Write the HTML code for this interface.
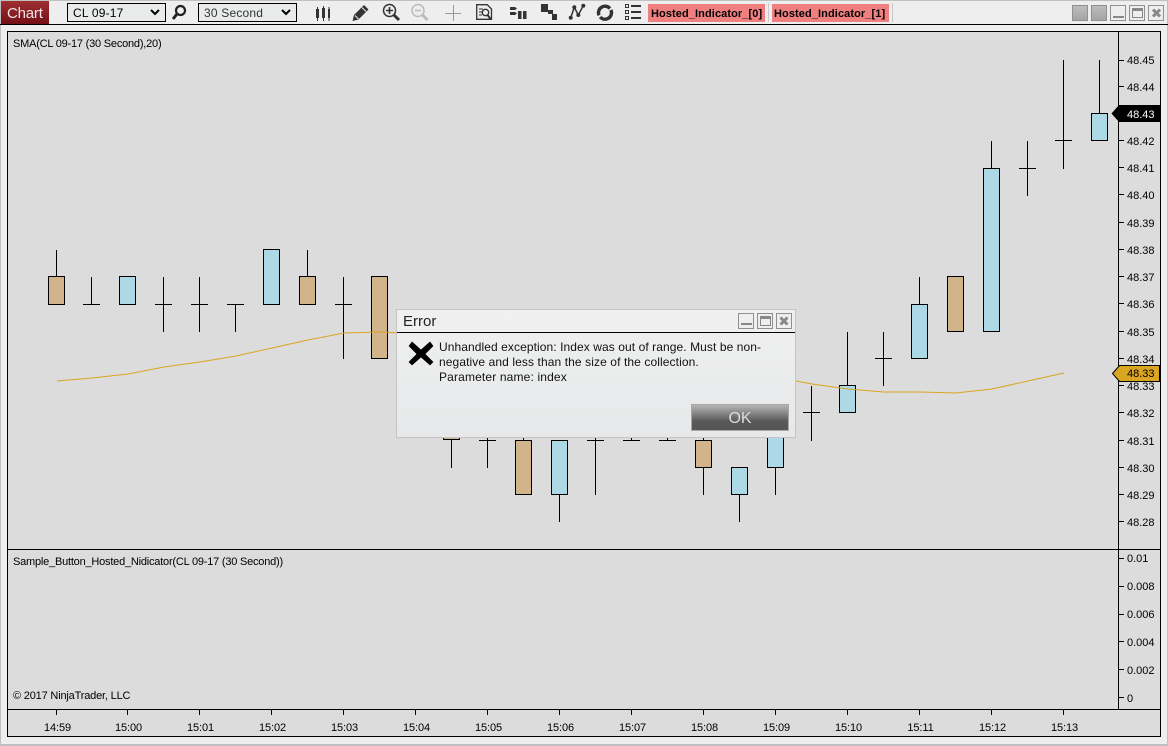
<!DOCTYPE html>
<html><head><meta charset="utf-8"><style>
html,body{margin:0;padding:0;background:#eee}
svg{display:block}
text{font-family:"Liberation Sans",Arial,sans-serif;font-size:11px;fill:#000}
.w{stroke:#000;stroke-width:1;fill:none;shape-rendering:crispEdges}
.t{fill:#D2B48C;stroke:#000;shape-rendering:crispEdges}
.b{fill:#ADD8E6;stroke:#000;shape-rendering:crispEdges}
.c{shape-rendering:crispEdges}
</style></head><body>
<svg width="1168" height="746" viewBox="0 0 1168 746" xmlns="http://www.w3.org/2000/svg">
<defs>
<linearGradient id="tab" x1="0" y1="0" x2="0" y2="1"><stop offset="0" stop-color="#9e2f33"/><stop offset="1" stop-color="#741015"/></linearGradient>
<linearGradient id="dlg" x1="0" y1="0" x2="0" y2="1"><stop offset="0" stop-color="#f0f0f0"/><stop offset="1" stop-color="#e6e8e9"/></linearGradient>
<linearGradient id="ok" x1="0" y1="0" x2="0" y2="1"><stop offset="0" stop-color="#b8b8b8"/><stop offset=".65" stop-color="#585858"/><stop offset="1" stop-color="#555"/></linearGradient>
<linearGradient id="gb" x1="0" y1="0" x2="0" y2="1"><stop offset="0" stop-color="#bdbdbd"/><stop offset="1" stop-color="#a4a4a4"/></linearGradient>
</defs>
<rect width="1168" height="746" fill="#eeeeee"/>
<rect x="0" y="0" width="1168" height="1" fill="#c0c0c0"/>
<rect x="0" y="0" width="1" height="746" fill="#c0c0c0"/>
<rect x="1167" y="0" width="1" height="746" fill="#c0c0c0"/>
<rect x="0" y="744" width="1168" height="2" fill="#c0c0c0"/>
<rect x="1" y="1" width="48" height="23" fill="url(#tab)"/>
<text x="7" y="18" style="font-size:15px;fill:#f0e4e4;letter-spacing:-.2px">Chart</text>
<rect x="0" y="24" width="1168" height="1" fill="#000"/>

<!-- combos -->
<rect x="67.500" y="3.500" width="98" height="18" fill="#e9ebeb" stroke="#000" class="c"/>
<text x="73" y="17" style="font-size:12px;letter-spacing:.2px">CL 09-17</text>
<path d="M151 10l4 4 4-4" fill="none" stroke="#000" stroke-width="2"/>
<rect x="198.500" y="3.500" width="98" height="18" fill="#e9ebeb" stroke="#000" class="c"/>
<text x="204" y="17" style="font-size:12px;letter-spacing:.2px;fill:#333">30 Second</text>
<path d="M282 10l4 4 4-4" fill="none" stroke="#000" stroke-width="2"/>

<!-- toolbar icons -->
<circle cx="180.500" cy="10.500" r="4.500" fill="none" stroke="#222" stroke-width="2.200"/><path d="M177 14l-4 5" stroke="#222" stroke-width="3"/>
<g fill="#333"><rect x="316" y="9" width="3" height="9"/><rect x="322" y="8" width="3" height="10"/><rect x="328" y="9" width="2" height="9"/><rect x="317" y="7" width="1" height="14"/><rect x="323" y="6" width="1" height="15"/><rect x="328.500" y="7" width="1" height="14"/></g>
<path d="M352.500 21l1.500-6 10-10 4.500 4.500-10 10z" fill="#333"/><path d="M355 15.500l3.500 3.500M362 7.500l4 4" stroke="#eee" stroke-width="1"/>
<circle cx="389.500" cy="10.500" r="6" fill="none" stroke="#333" stroke-width="1.500"/><path d="M386 10.500h7M389.500 7v7" stroke="#333" stroke-width="1.600"/><path d="M394 15l5 5" stroke="#333" stroke-width="3"/>
<circle cx="418" cy="10.500" r="6" fill="none" stroke="#bbb" stroke-width="1.500"/><path d="M415 10.500h6" stroke="#bbb" stroke-width="1.500"/><path d="M422.500 15l5 5" stroke="#bbb" stroke-width="3"/>
<path d="M445 13.500h16M453.500 5v16" stroke="#999" stroke-width="1" class="c"/>
<path d="M476.700 4.700h10.500l4.300 4.300v10.300h-14.800z" fill="none" stroke="#333" stroke-width="1.300"/><path d="M479 9h4M479 12h3M479 15h3" stroke="#333"/><circle cx="485.500" cy="12.500" r="3.200" fill="none" stroke="#333" stroke-width="1.400"/><path d="M487.500 15l3.500 4.500" stroke="#333" stroke-width="2"/>
<g fill="#333"><path d="M510 7h5l2 1.500-2 1.500h-5zM510 12h5l2 1.500-2 1.500h-5z"/><rect x="518" y="11" width="3.500" height="8"/><rect x="523" y="11" width="3.500" height="8"/></g>
<g fill="#333" class="c"><rect x="541" y="4" width="7" height="8"/><rect x="548" y="10" width="5" height="4"/><rect x="552" y="14" width="5" height="6"/></g>
<path d="M570.700 17.700l3.600-10.400 4 7.700 5-9.300" fill="none" stroke="#333" stroke-width="1.500"/><g fill="#333"><circle cx="570.700" cy="17.700" r="2"/><circle cx="574.300" cy="7.300" r="2"/><circle cx="578.300" cy="15" r="2"/><circle cx="583.300" cy="5.700" r="2"/></g>
<g transform="rotate(-25 605 12.700)"><circle cx="605" cy="12.700" r="6.500" fill="none" stroke="#333" stroke-width="3.400" stroke-dasharray="18.400 2 18.400 2"/></g>
<g fill="none" stroke="#333" class="c"><rect x="625.500" y="4.500" width="3" height="3"/><rect x="625.500" y="10.500" width="3" height="3"/><rect x="625.500" y="16.500" width="3" height="3"/></g>
<g fill="#333" class="c"><rect x="631" y="5" width="10" height="2"/><rect x="631" y="11" width="10" height="2"/><rect x="631" y="17" width="10" height="2"/></g>

<!-- hosted buttons -->
<rect x="648" y="4" width="117" height="18" fill="#F08080"/>
<text x="651" y="17" style="font-weight:bold;font-size:11px;letter-spacing:.09px">Hosted_Indicator_[0]</text>
<rect x="768" y="3" width="1" height="19" fill="#c8c8c8"/>
<rect x="772" y="4" width="117" height="18" fill="#F08080"/>
<text x="774" y="17" style="font-weight:bold;font-size:11px;letter-spacing:.09px">Hosted_Indicator_[1]</text>
<rect x="892" y="3" width="1" height="19" fill="#c8c8c8"/>

<!-- window buttons -->
<g class="c" stroke="#909090">
<rect x="1072.500" y="5.500" width="15" height="15" fill="url(#gb)"/>
<rect x="1091.500" y="5.500" width="15" height="15" fill="url(#gb)"/>
<rect x="1110.500" y="5.500" width="15" height="15" fill="#eee"/>
<rect x="1129.500" y="5.500" width="15" height="15" fill="#eee"/>
<rect x="1148.500" y="5.500" width="15" height="15" fill="#eee"/>
</g>
<rect x="1113" y="16" width="11" height="2" fill="#888"/>
<rect x="1132.500" y="8.500" width="10" height="9" fill="none" stroke="#888" class="c"/><rect x="1132" y="8" width="11" height="3" fill="#888"/>
<path d="M1153 9.500l7 7M1160 9.500l-7 7" stroke="#888" stroke-width="3"/>

<!-- chart frame -->
<rect x="7.500" y="31.500" width="1153" height="705" fill="#dcdcdc" stroke="#000" class="c"/>
<g class="c" fill="#000">
<rect x="1118" y="32" width="1" height="677"/>
<rect x="8" y="549" width="1152" height="1"/>
<rect x="8" y="709" width="1152" height="1"/>
</g>
<text x="13" y="47" style="letter-spacing:-.21px">SMA(CL 09-17 (30 Second),20)</text>
<text x="13" y="565" style="letter-spacing:-.21px">Sample_Button_Hosted_Nidicator(CL 09-17 (30 Second))</text>
<text x="13" y="699" style="letter-spacing:-.18px">© 2017 NinjaTrader, LLC</text>

<!-- price ticks -->
<path class="w" d="M1119 60.500h5M1119 86.500h5M1119 140.500h5M1119 167.500h5M1119 194.500h5M1119 222.500h5M1119 249.500h5M1119 276.500h5M1119 303.500h5M1119 331.500h5M1119 358.500h5M1119 385.500h5M1119 412.500h5M1119 440.500h5M1119 467.500h5M1119 494.500h5M1119 521.500h5M1119 558.500h5M1119 586.500h5M1119 614.500h5M1119 641.500h5M1119 669.500h5M1119 697.500h5"/>
<text x="1127" y="64">48.45</text><text x="1127" y="91">48.44</text><text x="1127" y="145">48.42</text><text x="1127" y="172">48.41</text><text x="1127" y="199">48.40</text><text x="1127" y="227">48.39</text><text x="1127" y="254">48.38</text><text x="1127" y="281">48.37</text><text x="1127" y="308">48.36</text><text x="1127" y="336">48.35</text><text x="1127" y="363">48.34</text><text x="1127" y="390">48.33</text><text x="1127" y="417">48.32</text><text x="1127" y="445">48.31</text><text x="1127" y="472">48.30</text><text x="1127" y="499">48.29</text><text x="1127" y="526">48.28</text>
<text x="1127" y="562">0.01</text><text x="1127" y="590">0.008</text><text x="1127" y="618">0.006</text><text x="1127" y="646">0.004</text><text x="1127" y="674">0.002</text><text x="1127" y="702">0</text>
<path d="M1111.500 113.500l7.500-8.500h41v17h-41z" fill="#000"/>
<text x="1127" y="118" style="fill:#fff">48.43</text>
<path d="M1112.500 373.500l7-8h40v16h-40z" fill="#DAA520" stroke="#000"/>
<text x="1127" y="377">48.33</text>

<!-- time axis -->
<path class="w" d="M56.500 710v5M127.500 710v5M199.500 710v5M271.500 710v5M343.500 710v5M415.500 710v5M487.500 710v5M559.500 710v5M631.500 710v5M703.500 710v5M775.500 710v5M847.500 710v5M919.500 710v5M991.500 710v5M1063.500 710v5"/>
<g text-anchor="middle" style="letter-spacing:-.1px">
<text x="57.500" y="731">14:59</text><text x="128.500" y="731">15:00</text><text x="200.500" y="731">15:01</text><text x="272.500" y="731">15:02</text><text x="344.500" y="731">15:03</text><text x="416.500" y="731">15:04</text><text x="488.500" y="731">15:05</text><text x="560.500" y="731">15:06</text><text x="632.500" y="731">15:07</text><text x="704.500" y="731">15:08</text><text x="776.500" y="731">15:09</text><text x="848.500" y="731">15:10</text><text x="920.500" y="731">15:11</text><text x="992.500" y="731">15:12</text><text x="1064.500" y="731">15:13</text>
</g>

<!-- wicks -->
<path class="w" d="M56.500 250v26M91.500 277v28M83 304.500h17M163.500 277v55M155 304.500h17M199.500 277v55M191 304.500h17M235.500 304v28M227 304.500h17M307.500 250v26M343.500 277v82M335 304.500h17M379.500 276v83
M451.500 438v30M487.500 430v38M479 440.500h17M523.500 430v10M559.500 495v27M595.500 430v65M587 440.500h17M631.500 430v11M623 440.500h17M667.500 430v11M659 440.500h17M703.500 468v27M703.500 430v10M739.500 495v27M775.500 468v27
M811.500 386v55M803 412.500h17M847.500 332v53M883.500 332v54M875 358.500h17M919.500 277v27M991.500 141v27M1027.500 141v55M1019 168.500h17M1063.500 60v109M1055 140.500h17M1099.500 60v53"/>
<!-- bodies -->
<rect class="t" x="48.500" y="276.500" width="16" height="28"/>
<rect class="b" x="119.500" y="276.500" width="16" height="28"/>
<rect class="b" x="263.500" y="249.500" width="16" height="55"/>
<rect class="t" x="299.500" y="276.500" width="16" height="28"/>
<rect class="t" x="371.500" y="276.500" width="16" height="82"/>
<rect class="t" x="443.500" y="420.500" width="16" height="19"/>
<rect class="t" x="515.500" y="440.500" width="16" height="54"/>
<rect class="b" x="551.500" y="440.500" width="16" height="54"/>
<rect class="t" x="695.500" y="440.500" width="16" height="27"/>
<rect class="b" x="731.500" y="467.500" width="16" height="27"/>
<rect class="b" x="767.500" y="420.500" width="16" height="47"/>
<rect class="b" x="839.500" y="385.500" width="16" height="27"/>
<rect class="b" x="911.500" y="304.500" width="16" height="54"/>
<rect class="t" x="947.500" y="276.500" width="16" height="55"/>
<rect class="b" x="983.500" y="168.500" width="16" height="163"/>
<rect class="b" x="1091.500" y="113.500" width="16" height="27"/>

<!-- SMA -->
<polyline fill="none" stroke="#DAA520" stroke-width="1" points="57,381 92,378 128,374 164,367 200,362 236,356 272,348 308,340 344,333 380,332 416,334 796,381 812,384 848,389 884,392 920,392 956,393 992,389 1028,381 1064,373"/>

<!-- dialog -->
<rect x="396.500" y="309.500" width="399" height="128" fill="url(#dlg)" stroke="#c4c4c4" class="c"/>
<rect x="397" y="332" width="398" height="1" fill="#000"/>
<text x="403" y="326" style="font-size:15px;fill:#222">Error</text>
<g class="c" stroke="#909090" fill="#eee">
<rect x="738.500" y="313.500" width="15" height="15"/>
<rect x="757.500" y="313.500" width="15" height="15"/>
<rect x="776.500" y="313.500" width="15" height="15"/>
</g>
<rect x="741" y="323" width="11" height="2" fill="#888"/>
<rect x="760.500" y="316.500" width="10" height="9" fill="none" stroke="#888" class="c"/><rect x="760" y="316" width="11" height="3" fill="#888"/>
<path d="M780.500 317.500l7 7M787.500 317.500l-7 7" stroke="#888" stroke-width="3"/>
<path d="M409 346l3-4 9 8 9-8 3 4-8 8 8 8-3 3-9-8-9 8-3-3 8-8z" fill="#000" stroke="#000" stroke-width=".6"/>
<text x="439" y="351" style="font-size:12px;fill:#111;letter-spacing:.08px">Unhandled exception: Index was out of range. Must be non-</text>
<text x="439" y="366" style="font-size:12px;fill:#111;letter-spacing:.1px">negative and less than the size of the collection.</text>
<text x="439" y="381" style="font-size:12px;fill:#111;letter-spacing:.15px">Parameter name: index</text>
<rect x="691.500" y="404.500" width="97" height="26" fill="url(#ok)" stroke="#a8a8a8" class="c"/>
<text x="740" y="423" text-anchor="middle" style="font-size:16px;fill:#dcdcdc">OK</text>
</svg>
</body></html>
